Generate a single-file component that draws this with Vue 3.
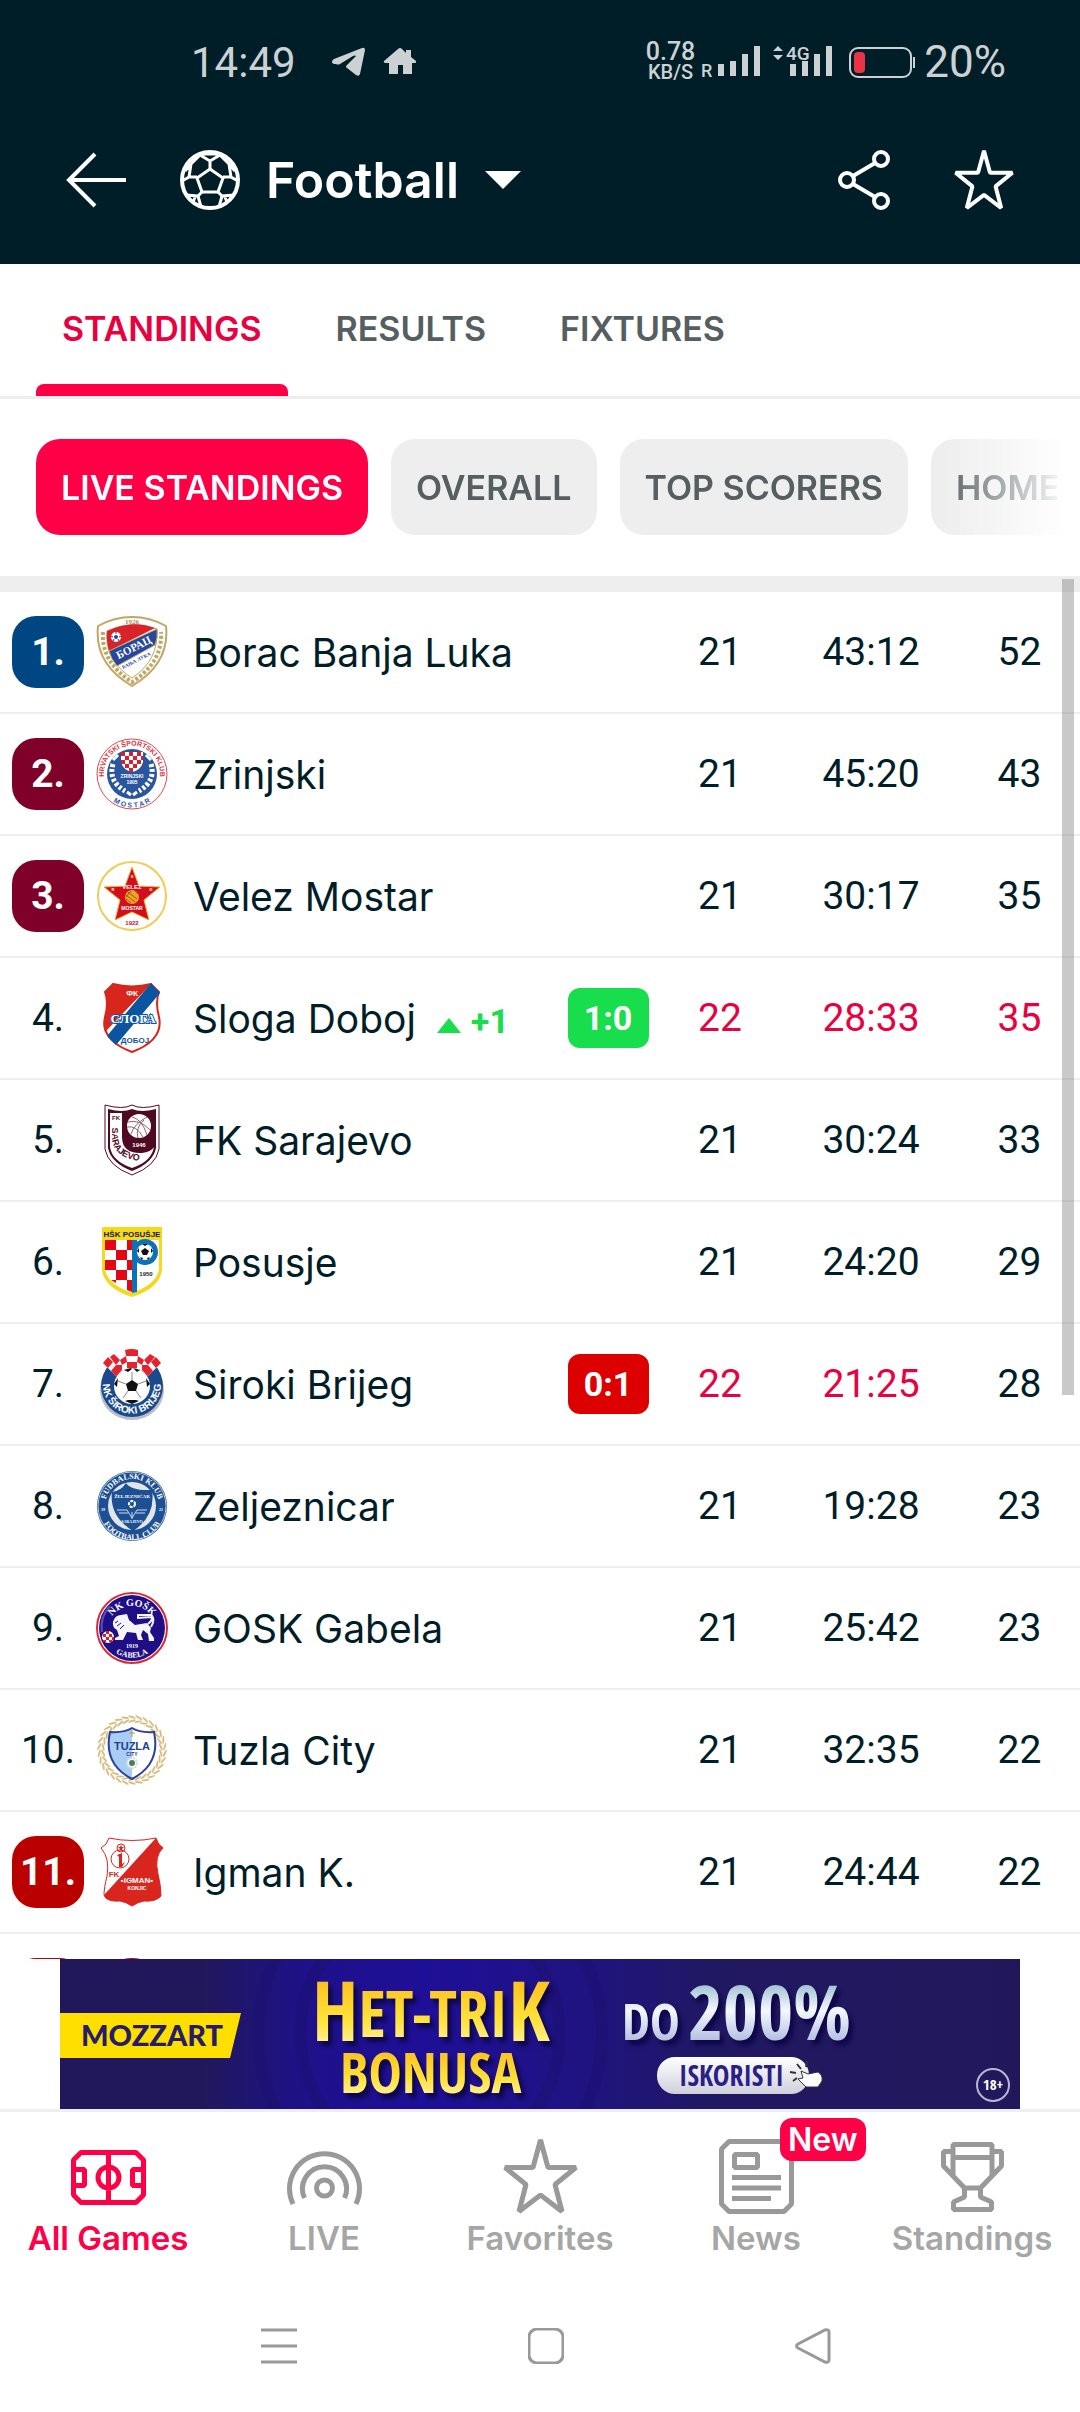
<template>
  <div class="app">

    <!-- Status bar and title -->
    <header class="top">
      <div class="status">
        <span class="clock">14:49</span>
        <svg class="status-left" viewBox="0 0 84 30" width="84" height="30">
          <path d="M0 15Q0 13 2 12L30 1Q33 0 33 3L28 27Q27 30 24 28L15 21Q13 20 15 18L24 9Q23 8 21 9L8 17Q6 18 4 17Q0 17 0 15z" fill="#ccd2d4" />
          <path d="M52 14L66 2Q68 0 70 2L74 6V3H79V10L84 14Q85 16 82 16H80V27H71V18H66V27H57V16H54Q51 16 52 14z" fill="#ccd2d4" />
        </svg>
        <div class="speed">
          <b>0.78</b>
          <small>KB/S</small>
        </div>
        <svg viewBox="0 0 132 36" width="132" height="36" class="signal" fill="#ccd2d4">
          <text x="0" y="33" font-size="18">R</text>
          <path d="M17 20h6v12h-6zM29 17h6v15h-6zM41 10h6v22h-6zM53 2h6v30h-6zM89 20h6v12h-6zM101 17h6v15h-6zM113 10h6v22h-6zM125 2h6v30h-6z" />
          <path d="M72 7l5-5 5 5zM72 11l5 5 5-5z" />
          <text x="85" y="16" font-size="19">4G</text>
        </svg>
        <svg viewBox="0 0 67 31" width="67" height="31">
          <rect x="1" y="1" width="61" height="29" rx="8" fill="none" stroke="#ccd2d4" stroke-width="2" />
          <rect x="5" y="5" width="11" height="21" rx="4" fill="#ea3345" />
          <path d="M65 10v11" stroke="#ccd2d4" stroke-width="2" />
        </svg>
        <span class="battery">20%</span>
      </div>

      <div class="title-bar">
        <button class="icon-btn" aria-label="Back">
          <svg viewBox="0 0 60 60" width="60" height="60" fill="none" stroke="#fff" stroke-width="4">
            <path d="M29 4L3 30L29 56M2 30H60" />
          </svg>
        </button>
        <button class="sport">
          <svg viewBox="0 0 60 60" width="60" height="60" fill="none" stroke="#fff" stroke-width="4">
            <circle cx="30" cy="30" r="28" />
            <g stroke-width="3">
              <path d="M30 19L43 28L38 42H22L17 28z" />
              <path d="M30 19V11L20 5M30 11L40 5M20 4H40M20 5L11 14L9 27L2 31M9 27H17M11 14L5 21M40 5L49 14L51 27L58 31M51 27H43M49 14L55 21" />
              <path d="M22 42L18 46L21 57M18 46L6 45M13 52L16 45M38 42L42 46L39 57M42 46L54 45M47 52L44 45" />
            </g>
          </svg>
          <span>Football</span>
          <svg viewBox="0 0 36 18" width="36" height="18"><path d="M0 0H36L18 18z" fill="#fff" /></svg>
        </button>
        <button class="icon-btn" aria-label="Share">
          <svg viewBox="0 0 52 60" width="52" height="60" fill="none" stroke="#fff" stroke-width="4">
            <circle cx="9" cy="30" r="7" /><circle cx="43" cy="9" r="7" /><circle cx="43" cy="51" r="7" />
            <path d="M15 26L37 13M15 34L37 47" />
          </svg>
        </button>
        <button class="icon-btn" aria-label="Favorite">
          <svg viewBox="0 0 75 75" width="60" height="60" fill="none" stroke="#fff" stroke-width="5" stroke-linejoin="bevel">
            <path :d="starPath" />
          </svg>
        </button>
      </div>
    </header>

    <!-- Tabs -->
    <nav class="tabs">
      <a v-for="tab in tabs" :key="tab" href="#" :class="{ active: tab === 'STANDINGS' }">{{ tab }}</a>
    </nav>

    <div class="chips">
      <button v-for="chip in chips" :key="chip" :class="{ active: chip === 'LIVE STANDINGS' }">{{ chip }}</button>
    </div>

    <!-- Standings -->
    <main class="standings">
      <div class="divider"></div>
      <table>
        <colgroup>
          <col class="c-rank" /><col class="c-crest" /><col /><col class="c-score" />
          <col class="c-played" /><col class="c-goals" /><col class="c-points" />
        </colgroup>
        <tbody>
          <tr v-for="team in teams" :key="team.rank">
            <td><span class="rank" :class="team.zone">{{ team.rank }}.</span></td>
            <td>
              <svg viewBox="0 0 72 72" width="72" height="72" aria-hidden="true">
                <g v-if="team.crest === 'borac'">
                  <path d="M2 10Q18 1 36 1T70 10Q74 48 36 70Q-2 48 2 10z" fill="#fff" stroke="#c2a663" stroke-width="2" />
                  <path d="M7 16Q5 46 36 66Q67 46 65 16" fill="none" stroke="#c2a663" stroke-width="4" stroke-dasharray="3 2" />
                  <path d="M11 15Q36 3 61 13Q63 44 36 62Q8 44 11 15z" fill="#fff" stroke="#c2a663" stroke-width="1" />
                  <path d="M11 15Q36 3 59 12L13 35Q10 24 11 15z" fill="#d8232a" />
                  <path d="M13 35L61 13Q62 22 59 29L21 50Q15 43 13 35z" fill="#26479b" stroke="#c2a663" stroke-width="1" />
                  <circle cx="20" cy="21" r="5" fill="#fff" />
                  <circle cx="20" cy="21" r="2" fill="#26479b" />
                  <path d="M20 16v2M15 20l2 1M25 20l-2 1M17 25l1-2M23 25l-1-2" stroke="#26479b" stroke-width="1" />
                  <text x="38" y="35" font-size="11" class="serif" fill="#fff" transform="rotate(-27 38 32)">БОРАЦ</text>
                  <text x="41" y="46" font-size="5" class="serif" fill="#26479b" transform="rotate(-27 41 46)">БАЊА ЛУКА</text>
                  <text x="36" y="8" font-size="7" class="serif" fill="#a88c4b">1926</text>
                </g>

                <g v-else-if="team.crest === 'zrinjski'">
                  <circle cx="36" cy="36" r="35" fill="#fff" stroke="#e0484f" stroke-width="1" />
                  <circle cx="36" cy="36" r="25" fill="#2a569f" />
                  <path d="M17 26Q12 43 29 53M55 26Q60 43 43 53" fill="none" stroke="#fff" stroke-width="5" stroke-dasharray="3 2" />
                  <path d="M17 22l5-5M55 22l-5-5M31 54l4 3M41 54l-4 3" stroke="#fff" stroke-width="3" />
                  <path d="M25 14h22v10q-2 8-11 10q-9-2-11-10z" fill="#fff" />
                  <path d="M25 14h4v4h-4zM33 14h4v4h-4zM41 14h4v4h-4zM29 18h4v4h-4zM37 18h4v4h-4zM45 18h2v4h-2zM25 22h4v4h-4zM33 22h4v4h-4zM41 22h4v4h-4zM29 26h4v4h-4zM37 26h4v4h-4zM33 30h4v4h-4z" fill="#d6202c" />
                  <text x="36" y="40" font-size="5" class="sans" fill="#fff">ZRINJSKI</text>
                  <text x="36" y="46" font-size="5" class="sans" fill="#fff">1905</text>
                  <path id="arc-zrinjski" d="M10 46A28 28 0 1 1 62 46" fill="none" />
                  <path id="arc-mostar" d="M8 54A33 33 0 0 0 64 54" fill="none" />
                  <text font-size="7" class="sans" fill="#d8323b"><textPath href="#arc-zrinjski" startOffset="50%">HRVATSKI ŠPORTSKI KLUB</textPath></text>
                  <text font-size="7" class="sans" fill="#2a569f"><textPath href="#arc-mostar" startOffset="50%">M O S T A R</textPath></text>
                </g>

                <g v-else-if="team.crest === 'velez'">
                  <circle cx="36" cy="36" r="34" fill="#fff" stroke="#efcd56" stroke-width="2" />
                  <path d="M36 7L43 26L64 27L48 40L53 60L36 52L19 60L24 40L8 27L29 26z" fill="#d30d1e" stroke="#efb52c" stroke-width="1" />
                  <circle cx="36" cy="37" r="7" fill="#e9a524" />
                  <path d="M30 35l9 7M32 32l9 7M38 30l4 4M30 39l5 4M35 31l-5 6" stroke="#a8501a" stroke-width="1" />
                  <text x="36" y="29" font-size="6" class="sans" fill="#fff">VELEZ</text>
                  <text x="36" y="50" font-size="5" class="sans" fill="#fff">MOSTAR</text>
                  <text x="36" y="18" font-size="4" class="sans" fill="#fff">S</text>
                  <text x="17" y="31" font-size="4" class="sans" fill="#fff">R</text>
                  <text x="55" y="31" font-size="4" class="sans" fill="#fff">D</text>
                  <text x="36" y="65" font-size="6" class="sans" fill="#c01024">1922</text>
                </g>

                <g v-else-if="team.crest === 'sloga'">
                  <path d="M17 2Q36 7 55 2L63 10Q59 20 63 35Q68 58 36 70Q4 58 9 35Q13 20 9 10z" fill="#fff" stroke="#d8261c" stroke-width="2" />
                  <path d="M17 2Q36 7 55 2L9 50Q6 43 9 35Q13 20 9 10z" fill="#d8261c" />
                  <path d="M55 1L64 11L20 63L11 54z" fill="#0b55a0" />
                  <text x="36" y="14" font-size="8" class="sans" fill="#fff">ФК</text>
                  <text x="37" y="41" font-size="13" class="serif" fill="#fff" stroke="#0b55a0" stroke-width="2" paint-order="stroke">СЛОГА</text>
                  <text x="39" y="61" font-size="8" class="sans" fill="#0b55a0">ДОБОЈ</text>
                </g>

                <g v-else-if="team.crest === 'sarajevo'">
                  <path d="M9 1Q27 6 36 1Q45 6 63 1V45Q60 62 36 71Q12 62 9 45z" fill="#fff" stroke="#4f0a22" stroke-width="1" />
                  <path d="M12 5Q27 9 36 5Q45 9 60 5V44Q57 59 36 67Q15 59 12 44z" fill="#4f0a22" />
                  <path d="M14 9H26V34Q27 50 46 49Q55 48 58 43Q55 58 36 64Q16 57 14 43z" fill="#fff" />
                  <circle cx="43" cy="22" r="12" fill="#fff" />
                  <path d="M32 18q12-3 22 8M35 30q3-10 16-17M42 34q-3-10 6-18M36 13q10 2 15 18M31 23q9-2 16 10" fill="none" stroke="#8d6370" stroke-width="1" />
                  <text x="43" y="43" font-size="6" class="sans" fill="#fff">1946</text>
                  <text x="20" y="16" font-size="6" class="sans" fill="#4f0a22">FK</text>
                  <path id="arc-sarajevo" d="M16 19V34Q18 56 48 57" fill="none" />
                  <text font-size="9" class="sans" fill="#4f0a22"><textPath href="#arc-sarajevo" startOffset="50%">SARAJEVO</textPath></text>
                </g>

                <g v-else-if="team.crest === 'posusje'">
                  <path d="M6 1H66V44Q64 62 36 71Q8 62 6 44z" fill="#f4d91f" />
                  <path d="M9 14H63V43Q61 58 36 67Q11 58 9 43z" fill="#fff" />
                  <path d="M9 14h11v10H9zM31 14h5v10h-5zM20 24h11v10H20zM9 34h11v10H9zM31 34h5v10h-5zM20 44h11v10H20zM31 54h5v12l-5-2zM15 54h5v3z" fill="#e30613" />
                  <path d="M36 14h5v52l-5 1z" fill="#0c72b8" />
                  <circle cx="49" cy="26" r="13" fill="#0c72b8" />
                  <circle cx="49" cy="26" r="8" fill="#fff" />
                  <path d="M49 22l4 3-2 4h-4l-2-4zM46 18h6l-3 2zM41 25l2-3v5zM57 25l-2-3v5zM44 31l3 1-1 2zM54 31l-3 1 1 2z" fill="#111" />
                  <text x="36" y="11" font-size="8" class="sans" fill="#1b1a10">HŠK POSUŠJE</text>
                  <text x="50" y="50" font-size="6" class="sans" fill="#222">1950</text>
                </g>

                <g v-else-if="team.crest === 'siroki'">
                  <ellipse cx="36" cy="42" rx="32" ry="30" fill="#b9bec8" />
                  <circle cx="36" cy="38" r="31" fill="#1b4a8c" />
                  <path d="M7 15Q20 1 36 1T65 15L52 28Q45 20 36 20T20 28z" fill="#fff" />
                  <path d="M29 2Q36 0 42 2V8H30zM14 9L18 6L24 12L20 17zM54 6L59 9L52 17L48 12zM24 12L30 8L31 14L26 17zM42 8L48 12L46 17L41 14zM31 14H41V20H31zM20 17L26 17L26 22L20 28L15 23zM46 17L52 17L57 23L52 28L46 22zM7 15L12 9L17 14L12 20zM60 9L65 15L60 20L55 14z" fill="#e5222d" />
                  <circle cx="36" cy="38" r="18" fill="#fff" />
                  <path d="M36 32l6 4-2 7h-8l-2-7zM28 22l7-2 1 1-4 3zM44 22l-7-2 4 4zM18 36l4-6-1 9zM54 36l-4-6 1 9zM29 53l7 3 7-3-3-1h-8z" fill="#111" />
                  <path d="M36 32v-8M42 36l8-3M40 43l5 7M32 43l-5 7M30 36l-8-3" stroke="#888" stroke-width="1" />
                  <path id="arc-siroki" d="M9 26A29 29 0 1 0 63 26" fill="none" />
                  <text font-size="10" class="sans" fill="#fff"><textPath href="#arc-siroki" startOffset="50%">NK ŠIROKI BRIJEG</textPath></text>
                </g>

                <g v-else-if="team.crest === 'zeljeznicar'">
                  <circle cx="36" cy="36" r="35" fill="#1d4f93" />
                  <circle cx="36" cy="36" r="34" fill="none" stroke="#b7c8df" stroke-width="1" />
                  <circle cx="36" cy="36" r="24" fill="#e1e4e8" />
                  <path d="M30 13Q35 21 56 20Q60 46 37 61Q13 46 16 22Q25 21 30 13z" fill="#1d4f93" />
                  <text x="36" y="28" font-size="5" class="serif" fill="#fff">ŽELJEZNIČAR</text>
                  <circle cx="36" cy="34" r="3" fill="none" stroke="#fff" stroke-width="2" stroke-dasharray="3 1" />
                  <path d="M21 40h10l5 8 5-8h10M23 43h9M49 43h-9M36 42v7" fill="none" stroke="#cfd9e8" stroke-width="1" />
                  <text x="36" y="53" font-size="4" class="serif" fill="#fff">SARAJEVO</text>
                  <text x="7" y="41" font-size="4" class="serif" fill="#fff">19</text>
                  <text x="65" y="41" font-size="4" class="serif" fill="#fff">21</text>
                  <path id="arc-fudbalski" d="M9 36A27 27 0 0 1 63 36" fill="none" />
                  <path id="arc-club" d="M4 38A32 32 0 0 0 68 38" fill="none" />
                  <text font-size="8" class="serif" fill="#fff"><textPath href="#arc-fudbalski" startOffset="50%">FUDBALSKI KLUB</textPath></text>
                  <text font-size="8" class="serif" fill="#fff"><textPath href="#arc-club" startOffset="50%">FOOTBALL CLUB</textPath></text>
                </g>

                <g v-else-if="team.crest === 'gosk'">
                  <circle cx="36" cy="36" r="35" fill="#fff" stroke="#d62b35" stroke-width="2" />
                  <circle cx="36" cy="36" r="33" fill="#1f0f86" />
                  <path d="M6 40A31 31 0 0 1 14 14" fill="none" stroke="#5a50b8" stroke-width="2" />
                  <path d="M17 30Q19 23 25 23L31 22L33 28L39 33L51 31L55 36L54 40L58 46V49H53L52 42L47 38L45 43L47 48H42L40 41L31 40L27 48H19V46L23 44L21 38Q16 35 17 30z" fill="#f4f4fa" />
                  <path d="M52 32Q58 27 55 25L42 26V23H55Q60 26 55 35" fill="none" stroke="#f4f4fa" stroke-width="2" />
                  <path d="M22 29l-3 2M25 31l-4 3M28 33l-4 4" stroke="#1f0f86" stroke-width="1" />
                  <circle cx="12" cy="45" r="6" fill="#fff" />
                  <path d="M7 42h3v3H7zM13 42h3v3h-3zM10 45h3v3h-3zM10 39h3v3h-3zM16 45h2v3h-2zM7 48h3v2H7zM13 48h3v2h-3z" fill="#d6202c" />
                  <text x="36" y="56" font-size="6" class="serif" fill="#fff">1919</text>
                  <path id="arc-gosk" d="M12 32A25 25 0 0 1 60 32" fill="none" />
                  <path id="arc-gabela" d="M8 48A31 31 0 0 0 64 48" fill="none" />
                  <text font-size="10" class="serif" fill="#fff"><textPath href="#arc-gosk" startOffset="50%">NK GOŠK</textPath></text>
                  <text font-size="8" class="serif" fill="#fff"><textPath href="#arc-gabela" startOffset="50%">GABELA</textPath></text>
                </g>

                <g v-else-if="team.crest === 'tuzla'">
                  <g fill="#d9bd80">
                    <g v-for="n in 30" :key="n" :transform="`rotate(${n * 12} 36 36)`">
                      <ellipse cx="36" cy="3" rx="4" ry="1" transform="rotate(20 36 3)" />
                      <ellipse cx="36" cy="7" rx="4" ry="1" transform="rotate(-20 36 7)" />
                    </g>
                  </g>
                  <path d="M14 18Q28 19 36 14Q44 19 58 18Q65 50 36 65Q7 50 14 18z" fill="#fff" />
                  <path d="M14 18Q28 19 36 14V65Q7 50 14 18z" fill="#a9cdf5" />
                  <path d="M14 18Q28 19 36 14Q44 19 58 18Q65 50 36 65Q7 50 14 18z" fill="none" stroke="#2a419f" stroke-width="2" />
                  <path d="M36 16v7M33 19h6" stroke="#b79a4f" stroke-width="1" />
                  <text x="36" y="36" font-size="11" class="sans" fill="#23408e">TUZLA</text>
                  <text x="36" y="42" font-size="5" class="sans" fill="#23408e">CITY</text>
                  <circle cx="36" cy="49" r="5" fill="#fff" stroke="#d5d9df" stroke-width="2" stroke-dasharray="2 1" />
                  <circle cx="36" cy="49" r="3" fill="#4d7a66" />
                </g>

                <g v-else-if="team.crest === 'igman'">
                  <path d="M13 2Q36 7 60 2Q62 9 67 12Q58 20 62 38Q65 50 65 60Q60 66 48 65Q42 66 36 70Q30 66 24 65Q10 66 8 59Q8 52 11 40Q14 22 5 12Q11 9 13 2z" fill="#fff" stroke="#d8261f" stroke-width="1" />
                  <path d="M60 2Q62 9 67 12Q58 20 62 38Q65 50 65 60Q60 66 48 65Q42 66 36 70Q30 66 24 65Q10 66 8 59z" fill="#d8261f" />
                  <circle cx="24" cy="23" r="9" fill="none" stroke="#d8261f" stroke-width="1" />
                  <circle cx="25" cy="12" r="4" fill="none" stroke="#d8261f" stroke-width="1" />
                  <path d="M25 9l1 2h2l-2 2 1 2-2-1-2 1 1-2-2-2h2z" fill="#d8261f" />
                  <path d="M21 19l5-2v11l3-2-3 5h-3v-10z" fill="#d8261f" />
                  <text x="18" y="41" font-size="8" class="sans" fill="#d8261f">FK</text>
                  <text x="41" y="47" font-size="8" class="sans" fill="#fff">•IGMAN•</text>
                  <text x="41" y="54" font-size="5" class="sans" fill="#fff">KONJIC</text>
                </g>

                <circle v-else cx="36" cy="36" r="36" fill="#9c0c22" />
              </svg>
            </td>
            <td class="name">
              {{ team.name }}
              <span v-if="team.up" class="up">
                <svg viewBox="0 0 24 15" width="24" height="15"><path d="M0 15L12 0L24 15z" fill="#18dd4c" /></svg>
                +{{ team.up }}
              </span>
            </td>
            <td><span v-if="team.score" class="score" :class="team.result">{{ team.score }}</span></td>
            <td :class="{ live: team.score }">{{ team.played }}</td>
            <td :class="{ live: team.score }">{{ team.goals }}</td>
            <td :class="{ live: team.up }">{{ team.points }}</td>
          </tr>
        </tbody>
      </table>
      <div class="scrollbar"></div>
    </main>

    <!-- Banner -->
    <a class="banner" href="#" aria-label="Mozzart">
      <svg viewBox="0 0 960 150">
        <defs>
          <linearGradient id="bg">
            <stop offset="0" stop-color="#21185c" /><stop offset="0.15" stop-color="#21185c" />
            <stop offset="0.25" stop-color="#1e1188" /><stop offset="0.38" stop-color="#1e0f98" />
            <stop offset="0.55" stop-color="#1f1380" /><stop offset="0.68" stop-color="#211862" />
            <stop offset="1" stop-color="#21185c" />
          </linearGradient>
          <linearGradient id="gold" x1="0" y1="0" x2="0" y2="1">
            <stop offset="0.1" stop-color="#fbb414" /><stop offset="0.6" stop-color="#ffe23a" /><stop offset="0.9" stop-color="#fff6b8" />
          </linearGradient>
          <linearGradient id="steel" x1="0" y1="0" x2="0" y2="1">
            <stop offset="0.1" stop-color="#6fa3b8" /><stop offset="0.5" stop-color="#f4f9ff" /><stop offset="0.9" stop-color="#9cabd6" />
          </linearGradient>
          <linearGradient id="pill" x1="0" y1="0" x2="0" y2="1">
            <stop offset="0" stop-color="#fff" /><stop offset="1" stop-color="#cfd0dc" />
          </linearGradient>
        </defs>
        <rect width="960" height="150" fill="url(#bg)" />
        <g fill="none" stroke="#1c1170" stroke-width="12" opacity="0.5">
          <circle cx="370" cy="75" r="130" /><circle cx="370" cy="75" r="172" />
        </g>
        <path d="M0 54H181L170 99H0z" fill="#ffdf00" />
        <text x="21" y="87" class="ad-brand" font-size="29" fill="#261c68">MOZZART</text>
        <g class="ad-text ad-title">
          <text x="252" y="82" fill="url(#gold)"><tspan font-size="82">H</tspan><tspan font-size="64" dy="-4">ET-TRI</tspan><tspan font-size="82" dy="4">K</tspan></text>
          <text x="280" y="134" font-size="56" fill="url(#gold)">BONUSA</text>
          <text x="562" y="81" fill="url(#steel)"><tspan font-size="50">DO</tspan><tspan font-size="76" dx="8">200%</tspan></text>
        </g>
        <rect x="597" y="98" width="152" height="37" rx="18" fill="url(#pill)" />
        <text x="619" y="127" class="ad-text" font-size="28" fill="#2a1f86">ISKORISTI</text>
        <path d="M741 112l7 3 10-2q5 3 4 9l-4 6h-12l-8-8 5-1z" fill="#fff" stroke="#333" stroke-width="1" />
        <path d="M741 110l-4-5M736 114l-6-1M746 108l1-6M737 119l-4 3" stroke="#333" stroke-width="2" />
        <circle cx="933" cy="126" r="16" fill="none" stroke="#b8b6d4" stroke-width="2" />
        <text x="933" y="131" text-anchor="middle" class="ad-text" font-size="15" fill="#fff">18+</text>
      </svg>
    </a>

    <!-- App navigation -->
    <nav class="bottom-nav">
      <a v-for="item in nav" :key="item.label" href="#" :class="{ active: item.active }">
        <svg viewBox="0 0 75 75" width="75" height="75" fill="none" stroke="currentColor" stroke-width="5" stroke-linejoin="bevel">
          <path :d="item.path" />
        </svg>
        <span>{{ item.label }}</span>
        <b v-if="item.badge" class="badge">{{ item.badge }}</b>
      </a>
    </nav>

    <!-- System buttons -->
    <div class="system">
      <button aria-label="Recent apps">
        <svg viewBox="0 0 36 36" width="36" height="36"><path d="M0 2H36M0 18H36M0 34H36" /></svg>
      </button>
      <button aria-label="Home">
        <svg viewBox="0 0 36 36" width="36" height="36"><rect x="1" y="1" width="34" height="34" rx="8" /></svg>
      </button>
      <button aria-label="Back">
        <svg viewBox="0 0 36 36" width="36" height="36"><path d="M3 16L30 2Q34 1 34 4V32Q34 35 30 34L3 20Q0 18 3 16z" /></svg>
      </button>
    </div>

  </div>
</template>

<script setup>
const starPath = 'M37.5 1L45 28.5H73L52 45.5L59 72.5L37.5 56L16 72.5L23 45.5L2 28.5H30z'

const tabs = ['STANDINGS', 'RESULTS', 'FIXTURES']
const chips = ['LIVE STANDINGS', 'OVERALL', 'TOP SCORERS', 'HOME']

const teams = [
  { rank: 1, crest: 'borac', name: 'Borac Banja Luka', played: 21, goals: '43:12', points: 52, zone: 'champion' },
  { rank: 2, crest: 'zrinjski', name: 'Zrinjski', played: 21, goals: '45:20', points: 43, zone: 'europe' },
  { rank: 3, crest: 'velez', name: 'Velez Mostar', played: 21, goals: '30:17', points: 35, zone: 'europe' },
  { rank: 4, crest: 'sloga', name: 'Sloga Doboj', played: 22, goals: '28:33', points: 35, up: 1, score: '1:0', result: 'win' },
  { rank: 5, crest: 'sarajevo', name: 'FK Sarajevo', played: 21, goals: '30:24', points: 33 },
  { rank: 6, crest: 'posusje', name: 'Posusje', played: 21, goals: '24:20', points: 29 },
  { rank: 7, crest: 'siroki', name: 'Siroki Brijeg', played: 22, goals: '21:25', points: 28, score: '0:1', result: 'loss' },
  { rank: 8, crest: 'zeljeznicar', name: 'Zeljeznicar', played: 21, goals: '19:28', points: 23 },
  { rank: 9, crest: 'gosk', name: 'GOSK Gabela', played: 21, goals: '25:42', points: 23 },
  { rank: 10, crest: 'tuzla', name: 'Tuzla City', played: 21, goals: '32:35', points: 22 },
  { rank: 11, crest: 'igman', name: 'Igman K.', played: 21, goals: '24:44', points: 22, zone: 'relegation' },
  { rank: 12, zone: 'relegation' }
]

const nav = [
  {
    label: 'All Games',
    active: true,
    path: 'M10 13.5H65L72.5 21V56L65 63.5H10L2.5 56V21zM37.5 13V64M27 38.5a10.5 10.5 0 1 0 21 0a10.5 10.5 0 1 0 -21 0M2.5 30.5H13.5V46.5H2.5M72.5 30.5H61.5V46.5H72.5'
  },
  {
    label: 'LIVE',
    path: 'M6 65A35 35 0 1 1 69 65M17.5 59A22 22 0 1 1 57.5 59M29.5 49a8 8 0 1 0 16 0a8 8 0 1 0 -16 0'
  },
  { label: 'Favorites', path: starPath },
  {
    label: 'News',
    badge: 'New',
    path: 'M10 2.5H65L72.5 10V65L65 72.5H10L2.5 65V10zM15.5 15.5H38.5V28.5H15.5zM13 38.5H62M13 49H62M13 59.5H52'
  },
  {
    label: 'Standings',
    path: 'M18 38V5.5H57V38M18 18.5H57M18 12.5H8.5V27L29.5 49H45.5L66.5 27V12.5H57M29.5 49V58L18.5 63V70.5H56.5V63L45.5 58V49'
  }
]
</script>

<style>
body {
  margin: 0;
  background: #fff;
}
</style>

<style scoped>
.app {
  display: flex;
  flex-direction: column;
  height: 100vh;
  overflow: hidden;
  background: #fff;
  color: #001e28;
  font-family: Inter, Roboto, sans-serif;
}

button {
  border: 0;
  padding: 0;
  background: none;
  color: inherit;
  font: inherit;
}

a {
  color: inherit;
  text-decoration: none;
}

svg {
  display: block;
  flex: none;
}

/* Lettering inside the crests */
.sans,
.serif {
  font-family: "Liberation Sans", sans-serif;
  font-weight: bold;
  text-anchor: middle;
}

.serif {
  font-family: "Liberation Serif", serif;
}

/* Header */
.top {
  background: #001e28;
  color: #fff;
  height: 264px;
}

.status {
  display: flex;
  align-items: center;
  height: 96px;
  padding: 28px 74px 0 191px;
  box-sizing: border-box;
  color: #ccd2d4;
  font-family: Roboto, sans-serif;
  font-size: 42px;
}

.status-left {
  margin: 0 auto 0 36px;
}

.speed {
  display: flex;
  flex-direction: column;
  align-items: center;
  margin-right: 6px;
  line-height: 20px;
}

.speed b {
  font-size: 25px;
  font-weight: 500;
}

.speed small {
  font-size: 20px;
  font-weight: 500;
}

.signal {
  overflow: visible;
  font-weight: 500;
  margin-right: 16px;
}

.battery {
  margin-left: 8px;
  font-size: 44px;
}

.title-bar {
  display: flex;
  align-items: center;
  padding: 54px 66px 0;
}

.sport {
  display: flex;
  align-items: center;
  gap: 26px;
  margin: 0 auto 0 54px;
  height: 60px;
  font-size: 50px;
  font-weight: 600;
}

.title-bar .icon-btn + .icon-btn {
  margin-left: 64px;
}

/* Tabs */
.tabs {
  display: flex;
  padding: 0 36px;
  gap: 22px;
  border-bottom: 3px solid #eee;
  font-size: 34px;
  font-weight: 600;
  color: #555e61;
}

.tabs a {
  position: relative;
  height: 132px;
  line-height: 130px;
  padding: 0 26px;
}

.tabs .active {
  color: #e8003f;
}

.tabs .active::after {
  content: "";
  position: absolute;
  left: 0;
  right: 0;
  bottom: 0;
  height: 12px;
  border-radius: 8px 8px 0 0;
  background: #ff0046;
}

.chips {
  display: flex;
  gap: 23px;
  padding: 40px 0 41px 36px;
  overflow: hidden;
  font-size: 34px;
  font-weight: 600;
  color: #555e61;
  mask-image: linear-gradient(to right, #000 calc(100% - 140px), transparent calc(100% - 12px));
}

.chips button {
  flex: none;
  height: 96px;
  padding: 0 25px;
  border-radius: 24px;
  background: #eee;
}

.chips .active {
  background: #ff0046;
  color: #fff;
}

/* Standings */
.standings {
  position: relative;
  flex: 1;
  min-height: 0;
  overflow: hidden;
}

.divider {
  height: 16px;
  background: #eee;
}

table {
  width: 100%;
  table-layout: fixed;
  border-collapse: separate;
  border-spacing: 0;
  font-family: Roboto, sans-serif;
  font-size: 39px;
}

.c-rank { width: 96px }
.c-crest { width: 72px }
.c-score { width: 98px }
.c-played { width: 126px }
.c-goals { width: 176px }
.c-points { width: 121px }

td {
  height: 120px;
  padding: 0;
  border-bottom: 2px solid #eee;
  text-align: center;
  white-space: nowrap;
}

td.name {
  padding-left: 25px;
  text-align: left;
  font-family: Inter, Roboto, sans-serif;
}

.rank {
  display: flex;
  align-items: center;
  justify-content: center;
  width: 72px;
  height: 72px;
  margin: 0 auto;
  border-radius: 24px;
}

.champion { background: #004682 }
.europe { background: #7f0029 }
.relegation { background: #bb0000 }

.champion,
.europe,
.relegation {
  color: #fff;
  font-weight: 700;
}

.up {
  display: inline-flex;
  align-items: baseline;
  gap: 10px;
  margin-left: 10px;
  color: #18dd4c;
  font-family: Roboto, sans-serif;
  font-size: 34px;
  font-weight: 700;
}

.score {
  display: inline-block;
  width: 81px;
  line-height: 60px;
  border-radius: 12px;
  color: #fff;
  font-size: 34px;
  font-weight: 700;
  vertical-align: middle;
}

.win { background: #18dd4c }
.loss { background: #dc0000 }
.live { color: #e8003f }

.scrollbar {
  position: absolute;
  top: 3px;
  right: 6px;
  width: 12px;
  height: 59%;
  background: rgba(130, 130, 130, 0.43);
}

/* Banner */
.banner {
  display: block;
  margin: 0 60px;
}

.ad-text {
  font-family: "Liberation Sans Narrow", "Open Sans Condensed", Roboto, sans-serif;
  font-weight: 700;
}

.ad-title {
  filter: drop-shadow(4px 5px 2px #0e0648);
}

.ad-brand {
  font-family: Lato, sans-serif;
  font-weight: 900;
}

/* Bottom navigation */
.bottom-nav {
  display: grid;
  grid-template-columns: repeat(5, 1fr);
  border-top: 3px solid #eee;
  color: #999;
  font-size: 33px;
  font-weight: 600;
}

.bottom-nav a {
  position: relative;
  display: flex;
  flex-direction: column;
  align-items: center;
  height: 168px;
  padding-top: 27px;
  box-sizing: border-box;
}

.bottom-nav span {
  line-height: 48px;
  color: #a6a6a6;
}

.bottom-nav .active,
.bottom-nav .active span {
  color: #ff0046;
}

.badge {
  position: absolute;
  top: 6px;
  left: 132px;
  padding: 0 8px;
  border-radius: 12px;
  background: #ff0046;
  color: #fff;
  font-size: 32px;
  font-weight: 600;
  line-height: 43px;
}

.system {
  display: grid;
  grid-template-columns: repeat(3, 1fr);
  align-items: center;
  height: 132px;
  padding: 0 134px 0 146px;
}

.system button {
  display: flex;
  justify-content: center;
}

.system svg {
  fill: none;
  stroke: #999;
  stroke-width: 3;
}
</style>
